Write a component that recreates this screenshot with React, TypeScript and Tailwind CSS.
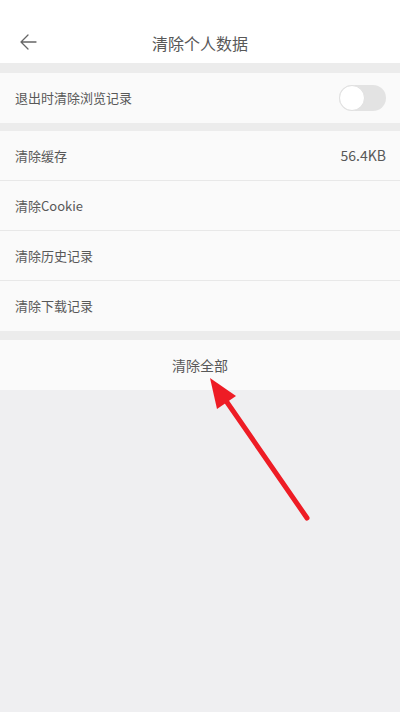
import React from "react";

const font = { fontFamily: '"Noto Sans CJK SC", "Noto Sans", sans-serif' };

function Row({ label, right, last }: { label: string; right?: React.ReactNode; last?: boolean }) {
  return (
    <div className={`h-[50px] flex items-center justify-between pl-[15px] pr-[14px] bg-[#fafafa] ${last ? "" : "border-b border-[#e8e8e8]"}`}>
      <span className="text-[13px] text-[#585858]">{label}</span>
      {right}
    </div>
  );
}

export default function App() {
  return (
    <div className="relative w-[400px] h-[712px] bg-[#efeff1] overflow-hidden" style={font}>
      <div className="h-[63px] bg-white relative flex items-center justify-center pt-[22px]">
        <svg className="absolute left-[19px] top-[33px]" width="18" height="18" viewBox="0 0 18 18" fill="none" stroke="#666" strokeWidth="1.3" strokeLinecap="round" strokeLinejoin="round">
          <path d="M17 9H2M9 2L2 9L9 16" />
        </svg>
        <span className="text-[16px] text-[#585858]">清除个人数据</span>
      </div>
      <div className="h-[10px] bg-[#ececec]" />
      <Row
        label="退出时清除浏览记录"
        last
        right={
          <div className="w-[47px] h-[26px] rounded-full bg-[#e3e3e3] relative">
            <div className="absolute left-0 top-0 w-[26px] h-[26px] rounded-full bg-white border border-[#e0e0e0]" />
          </div>
        }
      />
      <div className="h-[8px] bg-[#ececec]" />
      <Row label="清除缓存" right={<span className="text-[14px] text-[#585858]">56.4KB</span>} />
      <Row label="清除Cookie" />
      <Row label="清除历史记录" />
      <Row label="清除下载记录" last />
      <div className="h-[9px] bg-[#ececec]" />
      <div className="h-[50px] bg-[#fafafa] flex items-center justify-center">
        <span className="text-[14px] text-[#585858]">清除全部</span>
      </div>
      <svg className="absolute left-0 top-0 pointer-events-none" width="400" height="712" viewBox="0 0 400 712">
        <line x1="307" y1="518" x2="222" y2="395" stroke="#ee1c25" strokeWidth="5" strokeLinecap="round" />
        <polygon points="210,378 217,409 236,396" fill="#ee1c25" />
      </svg>
    </div>
  );
}
